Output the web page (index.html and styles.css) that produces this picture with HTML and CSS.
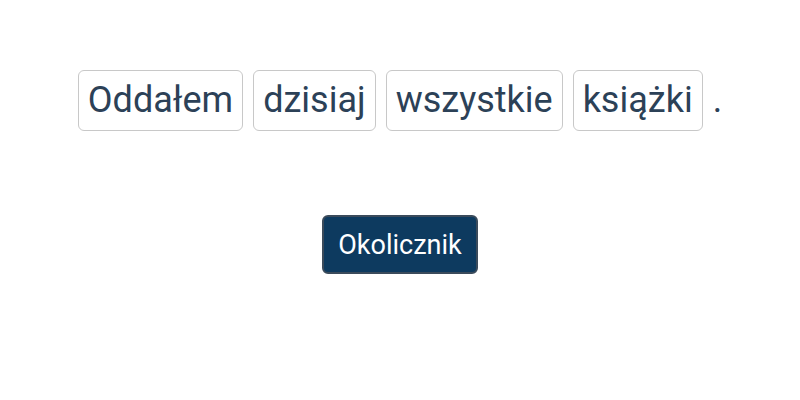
FILE: index.html
```html
<!DOCTYPE html>
<html lang="pl">
<head>
    <meta charset="UTF-8">
    <meta name="viewport" content="width=device-width, initial-scale=1.0">
    <title>Części zdania</title>
    <link rel="stylesheet" href="styles.css">
</head>
<body>
    <main class="exercise">
        <div class="sentence">
            <span class="word">Oddałem</span>
            <span class="word">dzisiaj</span>
            <span class="word">wszystkie</span>
            <span class="word">książki</span>
            <span class="dot">.</span>
        </div>
        <button class="answer">Okolicznik</button>
    </main>
</body>
</html>
```

FILE: styles.css
```css
/* reset */
* {
    margin: 0;
    padding: 0;
    box-sizing: border-box;
}

body {
    font-family: Roboto, 'Noto Sans', sans-serif;
    background: #ffffff;
    color: #2c4157;
}

/* main area */
.exercise {
    display: flex;
    flex-direction: column;
    align-items: center;
    padding-top: 70px;
    gap: 84px;
}

/* sentence row */
.sentence {
    display: flex;
    align-items: center;
    gap: 10px;
}

.word {
    font-size: 36px;
    line-height: 59px;
    padding: 0 9px;
    border: 1px solid #c8c8c8;
    border-radius: 6px;
}

.dot {
    font-size: 36px;
    line-height: 59px;
}

/* answer button */
.answer {
    font-family: Roboto, 'Noto Sans', sans-serif;
    font-size: 27px;
    color: #ffffff;
    background: #0d3a5f;
    border: 2px solid #3b4b5b;
    border-radius: 6px;
    height: 59px;
    padding: 0 14px;
    cursor: pointer;
}
```
